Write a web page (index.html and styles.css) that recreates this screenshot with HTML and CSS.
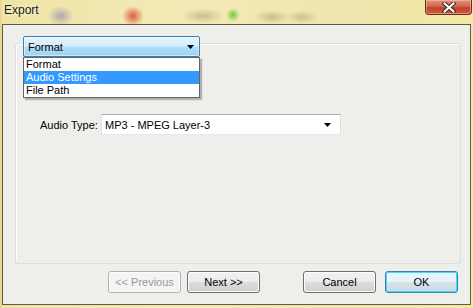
FILE: index.html
```html
<!doctype html>
<html>
	<head>
		<title>Export</title>
		<link rel="stylesheet" href="styles.css">
	</head>
	<body>
		<div class="window">
			<div class="titlebar">
				<span class="title">Export</span>
				<span class="close">
					<svg width="14" height="11" viewBox="0 0 14 11">
						<path d="M2.5 1.5 L11.5 9.5 M11.5 1.5 L2.5 9.5" stroke="#3a2a26" stroke-width="4" stroke-linecap="square"/>
						<path d="M2.5 1.5 L11.5 9.5 M11.5 1.5 L2.5 9.5" stroke="#ffffff" stroke-width="2" stroke-linecap="square"/>
					</svg>
				</span>
			</div>
			<div class="client">
				<div class="group">
					<div class="page-select">
						<div class="combo combo-hot">
							<span class="combo-text">Format</span>
							<svg class="arrow" width="7" height="4" viewBox="0 0 7 4"><path d="M0 0 H7 L3.5 4 Z" fill="#000"/></svg>
						</div>
						<ul class="droplist">
							<li>Format</li>
							<li class="selected">Audio Settings</li>
							<li>File Path</li>
						</ul>
					</div>
					<div class="field">
						<span class="label">Audio Type:</span>
						<div class="combo combo-white">
							<span class="combo-text">MP3 - MPEG Layer-3</span>
							<svg class="arrow" width="7" height="4" viewBox="0 0 7 4"><path d="M0 0 H7 L3.5 4 Z" fill="#000"/></svg>
						</div>
					</div>
				</div>
				<div class="buttons">
					<div class="nav">
						<button class="btn" disabled>&lt;&lt; Previous</button>
						<button class="btn">Next &gt;&gt;</button>
					</div>
					<div class="actions">
						<button class="btn">Cancel</button>
						<button class="btn btn-default">OK</button>
					</div>
				</div>
			</div>
		</div>
	</body>
</html>
```

FILE: styles.css
```css
body {
	margin: 0;
	font-family: "Liberation Sans", Arial, Helvetica, sans-serif;
	font-size: 11px;
	background: #f0e6a8;
}

.window {
	width: 473px;
	height: 308px;
	display: flex;
	flex-direction: column;
	background:
		radial-gradient(ellipse 13px 10px at 61px 16px, rgba(125, 118, 180, 0.55), rgba(125, 118, 180, 0)),
		radial-gradient(ellipse 11px 10px at 133px 16px, rgba(214, 70, 45, 0.85), rgba(214, 70, 45, 0)),
		radial-gradient(ellipse 22px 8px at 203px 16px, rgba(120, 110, 80, 0.35), rgba(120, 110, 80, 0)),
		radial-gradient(ellipse 7px 7px at 233px 15px, rgba(90, 200, 40, 0.85), rgba(90, 200, 40, 0)),
		radial-gradient(ellipse 18px 7px at 272px 17px, rgba(120, 110, 80, 0.35), rgba(120, 110, 80, 0)),
		radial-gradient(ellipse 16px 7px at 302px 17px, rgba(120, 110, 80, 0.3), rgba(120, 110, 80, 0)),
		linear-gradient(90deg, #e4d68e 0, #efe4a6 3px, #f3eab6 40%, #efe4ac 75%, #f3e9a4 100%);
}

.titlebar {
	height: 24px;
	display: flex;
	justify-content: space-between;
	align-items: flex-start;
}

.title {
	margin: 3px 0 0 4px;
	font-size: 12px;
	line-height: 14px;
	color: #1a1a1a;
	text-shadow: 0 0 4px rgba(255, 255, 240, 0.9);
}

.close {
	width: 47px;
	height: 15px;
	margin-right: 1px;
	box-sizing: border-box;
	border: 1px solid #6f2a1c;
	border-top: 0;
	border-radius: 0 0 4px 4px;
	background: linear-gradient(#e2907c 0, #d2684e 45%, #c0432a 55%, #cc5a3e 100%);
	box-shadow: inset 0 0 0 1px rgba(255, 210, 190, 0.5);
	display: flex;
	justify-content: center;
	align-items: center;
}

.client {
	flex: 1;
	margin: 0 2px 3px 2px;
	border: 1px solid #5f5c48;
	background: #eeefeb;
	padding: 18px 9px 0 12px;
}

.group {
	height: 221px;
	box-sizing: border-box;
	border: 1px solid #d5dfe5;
	border-radius: 3px;
	box-shadow: inset 1px 1px 0 #ffffff;
}

.page-select {
	position: relative;
	width: 177px;
	margin: -8px 0 0 7px;
}

.combo {
	height: 21px;
	box-sizing: border-box;
	display: flex;
	align-items: center;
	justify-content: space-between;
}

.combo-text {
	padding-left: 3px;
	color: #000;
}

.combo-hot {
	border: 1px solid #3c7fb1;
	border-radius: 2px;
	background: linear-gradient(#e5f4fc 0, #d4edfb 45%, #b0dcf5 55%, #9ed3f1 100%);
	box-shadow: inset 0 0 0 1px rgba(255, 255, 255, 0.5);
}

.combo-hot .combo-text {
	padding-left: 4px;
}

.combo-hot .arrow {
	margin-right: 5px;
}

.droplist {
	position: absolute;
	top: 100%;
	left: 0;
	width: 177px;
	box-sizing: border-box;
	margin: 0;
	padding: 0;
	list-style: none;
	background: #fff;
	border: 1px solid #646464;
	box-shadow: 2px 2px 1px rgba(0, 0, 0, 0.25);
	z-index: 2;
}

.droplist li {
	height: 13px;
	line-height: 13px;
	padding-left: 2px;
	color: #000;
}

.droplist li.selected {
	background: #3399ff;
	color: #fff;
}

.field {
	display: flex;
	align-items: center;
	margin: 57px 0 0 24px;
}

.label {
	width: 59px;
	margin-right: 2px;
	color: #000;
}

.combo-white {
	width: 240px;
	background: #fff;
	border: 1px solid;
	border-color: #abadb3 #dbdfe6 #e3e9ef #e2e3ea;
}

.combo-white .arrow {
	margin-right: 9px;
}

.buttons {
	display: flex;
	margin: 7px 0 0 93px;
}

.nav, .actions {
	display: flex;
	gap: 6px;
}

.actions {
	margin-left: 43px;
	gap: 9px;
}

.btn {
	width: 73px;
	height: 22px;
	padding: 0;
	font-family: "Liberation Sans", Arial, Helvetica, sans-serif;
	font-size: 11px;
	color: #000;
	border: 1px solid #707070;
	border-radius: 3px;
	background: linear-gradient(#f2f2f2 0, #ebebeb 48%, #dddddd 52%, #cfcfcf 100%);
	box-shadow: inset 0 0 0 1px #fcfcfc;
}

.btn:disabled {
	color: #9a9a9a;
	border-color: #adb2b5;
	background: #f4f4f4;
}

.btn-default {
	border-color: #3c7fb1;
	box-shadow: inset 0 0 0 1px #48d8fb;
	background: linear-gradient(#eaf6fd 0, #e6f2f9 48%, #d6e3ea 52%, #cdd9df 100%);
}
```
